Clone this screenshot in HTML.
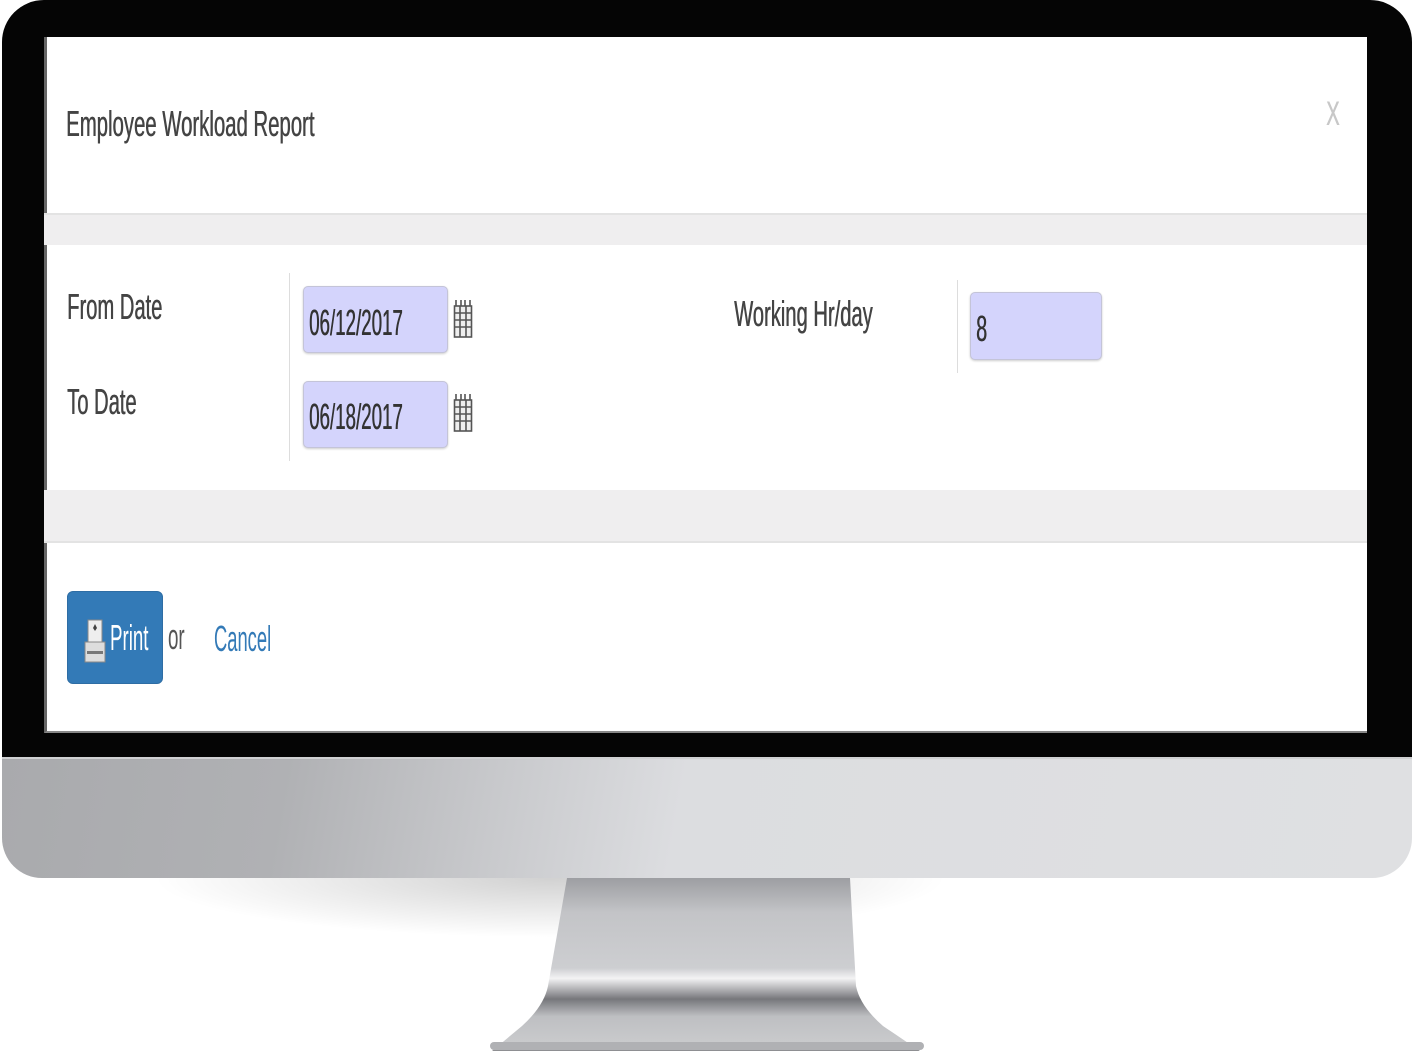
<!DOCTYPE html>
<html><head><meta charset="utf-8"><style>
*{margin:0;padding:0;box-sizing:border-box}
body{width:1412px;height:1052px;background:#fff;position:relative;overflow:hidden;font-family:"Liberation Sans",sans-serif}
.a{position:absolute}
.t{position:absolute;white-space:nowrap;transform-origin:0 0;color:#444;font-size:36px;line-height:36px;text-shadow:0.7px 0 0 currentColor}
.bezel{left:2px;top:0;width:1410px;height:758px;background:#050505;border-radius:42px 42px 0 0}
.chin{left:2px;top:757px;width:1410px;height:121px;border-radius:0 0 40px 40px;background:linear-gradient(100deg,#a9aaad 0%,#b0b1b4 20%,#c8c9cc 35%,#dcdde0 48%,#dfe0e2 100%);border-top:2px solid #cfd0d2}
.screen{left:44px;top:37px;width:1323px;height:696px;background:#fff;border-left:3px solid #666;border-bottom:2px solid #888}
.band{left:44px;width:1323px;background:#efeeef;border-top:2px solid #e3e3e3}
.inp{background:#d4d4fc;border:1px solid #c4c4d8;border-radius:5px;box-shadow:0 1px 2px rgba(0,0,0,.2)}
.vl{width:1px;background:#ddd}
</style></head><body>
<div class="a bezel"></div>
<div class="a chin"></div>
<div class="a screen"></div>
<div class="a" style="left:150px;top:878px;width:800px;height:60px;background:radial-gradient(ellipse at 50% 0,rgba(0,0,0,.18),rgba(0,0,0,0) 70%)"></div>
<svg class="a" style="left:480px;top:876px" width="460" height="176" viewBox="0 0 460 176">
<defs><linearGradient id="g" x1="0" y1="0" x2="0" y2="1">
<stop offset="0" stop-color="#9d9ea2"/><stop offset=".2" stop-color="#c3c4c7"/><stop offset=".52" stop-color="#cdced1"/><stop offset=".58" stop-color="#f3f3f4"/><stop offset=".7" stop-color="#76777b"/><stop offset=".8" stop-color="#bebfc2"/><stop offset=".95" stop-color="#c9cacc"/><stop offset="1" stop-color="#8a8b8e"/></linearGradient></defs>
<path d="M87 2 L370 2 L376 110 Q380 130 403 150 L440 175 L12 175 L42 150 Q64 130 68 110 Z" fill="url(#g)"/>
<rect x="10" y="166" width="434" height="8" rx="4" fill="#b0b1b4"/>
</svg>
<div class="t" style="left:66px;top:106px;transform:scaleX(.565)">Employee Workload Report</div>
<div class="t" style="left:1326px;top:96px;color:#c8c8c8;font-size:34px;transform:scaleX(.6)">X</div>
<div class="a band" style="top:213px;height:32px"></div>
<div class="t" style="left:67px;top:289px;transform:scaleX(.56)">From Date</div>
<div class="t" style="left:67px;top:384px;transform:scaleX(.56)">To Date</div>
<div class="a vl" style="left:289px;top:273px;height:188px"></div>
<div class="a inp" style="left:303px;top:286px;width:145px;height:67px"></div>
<div class="t" style="left:309px;top:305px;color:#333;transform:scaleX(.52)">06/12/2017</div>
<div class="a inp" style="left:303px;top:381px;width:145px;height:67px"></div>
<div class="t" style="left:309px;top:399px;color:#333;transform:scaleX(.52)">06/18/2017</div>
<svg class="a" style="left:453px;top:298px" width="20" height="42" viewBox="0 0 20 42"><g fill="none" stroke="#555" stroke-width="1.6"><path d="M3 2v8M8 2v8M12 2v8M17 2v8"/><rect x="1.5" y="8" width="17" height="31" fill="#eee"/><path d="M1.5 15h17M1.5 22h17M1.5 29h17M7 8v31M13 8v31"/></g></svg>
<svg class="a" style="left:453px;top:392px" width="20" height="42" viewBox="0 0 20 42"><g fill="none" stroke="#555" stroke-width="1.6"><path d="M3 2v8M8 2v8M12 2v8M17 2v8"/><rect x="1.5" y="8" width="17" height="31" fill="#eee"/><path d="M1.5 15h17M1.5 22h17M1.5 29h17M7 8v31M13 8v31"/></g></svg>
<div class="t" style="left:734px;top:296px;transform:scaleX(.56)">Working Hr/day</div>
<div class="a vl" style="left:957px;top:280px;height:93px"></div>
<div class="a inp" style="left:970px;top:292px;width:132px;height:68px"></div>
<div class="t" style="left:976px;top:311px;color:#333;transform:scaleX(.55)">8</div>
<div class="a band" style="top:490px;height:53px;border-bottom:2px solid #e3e3e3;border-top:none"></div>
<div class="a" style="left:67px;top:591px;width:96px;height:93px;background:#337ab7;border-radius:6px;border:1px solid #2e6da4"></div>
<svg class="a" style="left:84px;top:618px" width="22" height="46" viewBox="0 0 22 46"><rect x="4" y="2" width="14" height="22" fill="#eee" stroke="#888"/><path d="M11 6l2 4-2 3-2-3z" fill="#444"/><rect x="1" y="24" width="20" height="20" fill="#ddd" stroke="#888"/><rect x="3" y="33" width="16" height="3" fill="#777"/></svg>
<div class="t" style="left:110px;top:620px;color:#fff;transform:scaleX(.52);text-shadow:none">Print</div>
<div class="t" style="left:168px;top:619px;color:#555;transform:scaleX(.52);text-shadow:none">or</div>
<div class="t" style="left:214px;top:621px;color:#337ab7;transform:scaleX(.51);text-shadow:none">Cancel</div>
</body></html>
